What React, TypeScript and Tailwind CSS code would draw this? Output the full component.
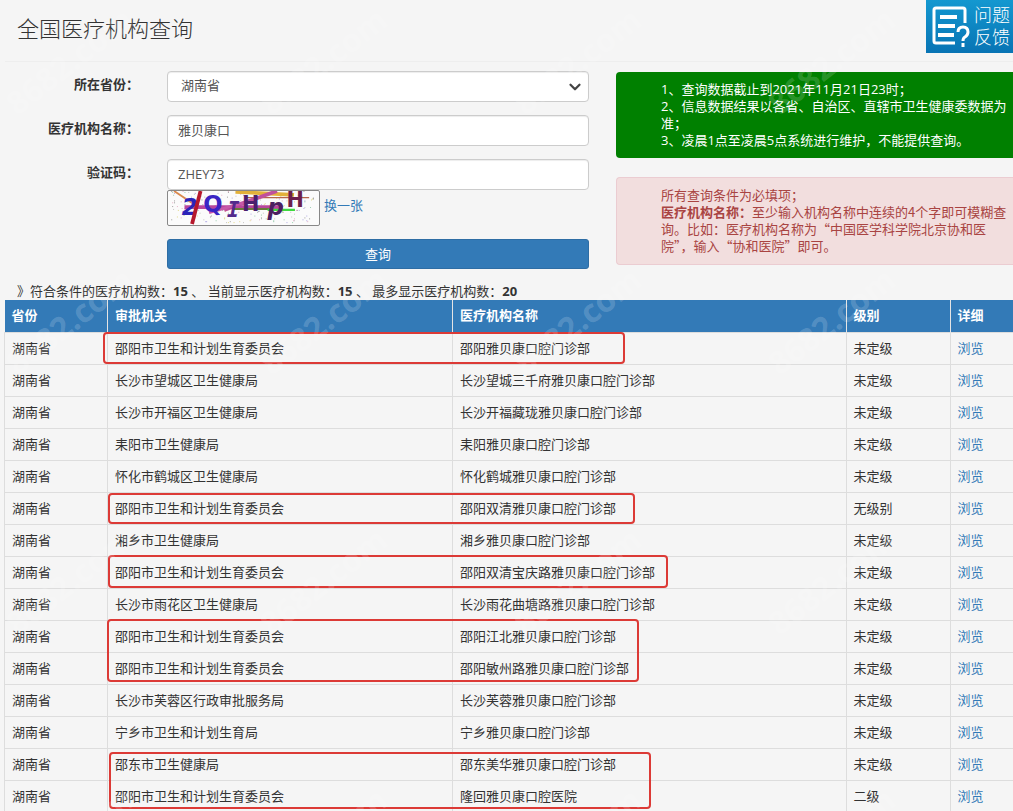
import { ChevronDown } from "lucide-react";

const BUREAU = "邵阳市卫生和计划生育委员会";

const rows = [
  { org: BUREAU, name: "邵阳雅贝康口腔门诊部", level: "未定级" },
  { org: "长沙市望城区卫生健康局", name: "长沙望城三千府雅贝康口腔门诊部", level: "未定级" },
  { org: "长沙市开福区卫生健康局", name: "长沙开福藏珑雅贝康口腔门诊部", level: "未定级" },
  { org: "耒阳市卫生健康局", name: "耒阳雅贝康口腔门诊部", level: "未定级" },
  { org: "怀化市鹤城区卫生健康局", name: "怀化鹤城雅贝康口腔门诊部", level: "未定级" },
  { org: BUREAU, name: "邵阳双清雅贝康口腔门诊部", level: "无级别" },
  { org: "湘乡市卫生健康局", name: "湘乡雅贝康口腔门诊部", level: "未定级" },
  { org: BUREAU, name: "邵阳双清宝庆路雅贝康口腔门诊部", level: "未定级" },
  { org: "长沙市雨花区卫生健康局", name: "长沙雨花曲塘路雅贝康口腔门诊部", level: "未定级" },
  { org: BUREAU, name: "邵阳江北雅贝康口腔门诊部", level: "未定级" },
  { org: BUREAU, name: "邵阳敏州路雅贝康口腔门诊部", level: "未定级" },
  { org: "长沙市芙蓉区行政审批服务局", name: "长沙芙蓉雅贝康口腔门诊部", level: "未定级" },
  { org: "宁乡市卫生和计划生育局", name: "宁乡雅贝康口腔门诊部", level: "未定级" },
  { org: "邵东市卫生健康局", name: "邵东美华雅贝康口腔门诊部", level: "未定级" },
  { org: BUREAU, name: "隆回雅贝康口腔医院", level: "二级" },
];

// hand-drawn marks over the result table
const marks = [
  "left-[99px] top-[32px] h-[32px] w-[522px]",
  "left-[104px] top-[193px] h-[31px] w-[527px]",
  "left-[104px] top-[255px] h-[33px] w-[560px]",
  "left-[103px] top-[319px] h-[63px] w-[532px]",
  "left-[105px] top-[452px] h-[57px] w-[542px]",
];

const field =
  "h-[31px] w-full rounded border border-[#ccc] bg-white pb-[2px] text-[13px] text-[#555] shadow-[inset_0_1px_1px_rgba(0,0,0,0.075)] outline-none focus:border-[#66afe9]";
const label = "w-[134px] shrink-0 pb-1 text-right font-bold text-[#333]";
const th = "border-r border-[#e4e4e4] px-[7px] text-left font-bold last:border-r-0";
const td = "border border-[#ddd] px-[7px]";

function Captcha() {
  const colors = ["#333", "#c8b400", "#5b4bd0", "#2c9c5a", "#d05a8c", "#888"];
  const dots = Array.from({ length: 190 }, (_, i) => ({
    x: (i * 67 + ((i * i) % 13) * 5) % 151,
    y: (i * 29 + ((i * i) % 7) * 3) % 34,
    c: colors[i % colors.length],
  }));
  return (
    <svg viewBox="0 0 153 36" className="h-9 w-[153px] rounded-xs border border-[#888] bg-[#fbfbfb]" role="img" aria-label="验证码">
      {dots.map((d, i) => (
        <rect key={i} x={d.x} y={d.y} width="1" height="1" fill={d.c} opacity="0.5" />
      ))}
      <path d="M3 0L24 14" stroke="#d98a4e" strokeWidth="2" />
      <path d="M68 1L130 4" stroke="#e2b13a" strokeWidth="4" />
      <path d="M80 7H146" stroke="#b5654a" strokeWidth="1.5" />
      <path d="M56 20L112 0" stroke="#c0509c" strokeWidth="4" />
      <path d="M14 17L118 17" stroke="#b8479c" strokeWidth="4" />
      <path d="M40 23L78 12" stroke="#c659a8" strokeWidth="3" />
      <path d="M66 19L104 19" stroke="#6a7a3a" strokeWidth="2" />
      <path d="M102 20H131" stroke="#3fd93f" strokeWidth="2.5" />
      <g fontFamily="'DejaVu Sans', sans-serif" fontWeight="700" fontSize="24">
        <text x="11" y="25" fill="#2b23b8" fontStyle="italic">2</text>
        <text x="34" y="22" fill="#3a25c4">Q</text>
        <text x="59" y="27" fontSize="22" fill="#532a8c" fontStyle="italic" fontFamily="'DejaVu Sans Mono', monospace">I</text>
        <text x="75" y="21" fontSize="22" fill="#4a1f6e">H</text>
        <text x="102" y="25" fill="#4c2060" fontStyle="italic">p</text>
        <text x="122" y="17" fontSize="22" fill="#6b1f4c">H</text>
      </g>
      <path d="M31 0L22 35" stroke="#b5182c" strokeWidth="4" />
    </svg>
  );
}

function FeedbackLink() {
  return (
    <a href="#feedback" className="flex h-[53px] w-[87px] items-center gap-1 bg-linear-to-b from-[#1498d0] to-[#0874b4] pl-[6px] text-white">
      <svg viewBox="0 0 38 42" className="h-[42px] w-[38px] shrink-0" fill="none" stroke="#fff" strokeWidth="3">
        <path d="M33 17V4a2 2 0 0 0-2-2H4a2 2 0 0 0-2 2V35a2 2 0 0 0 2 2H23" />
        <path d="M8 11H25M6 20H23M6 29H22" strokeWidth="4" />
        <path d="M26 26q0-5 5-5t5 5q0 3-3 5-2 1-2 4M31 37v4" />
      </svg>
      <span className="pb-[2px] text-[18px] leading-[22px] font-light">
        问题
        <br />
        反馈
      </span>
    </a>
  );
}

function Watermarks() {
  return (
    <div aria-hidden="true" className="pointer-events-none absolute inset-0 overflow-hidden select-none">
      <div className="grid -translate-x-[58px] -translate-y-[70px] auto-rows-[260px] grid-cols-[repeat(4,254px)]">
        {Array.from({ length: 16 }, (_, i) => (
          <div key={i} className="flex items-center justify-center">
            <span className="-rotate-38 text-[32px] font-bold text-white/18">8682.com</span>
          </div>
        ))}
      </div>
    </div>
  );
}

export default function App() {
  return (
    <div className="relative min-h-screen overflow-hidden bg-[#f5f5f5] pl-1 font-['Open_Sans','Noto_Sans_CJK_SC',sans-serif] text-[13px] leading-[17px] text-[#333]">
      <header className="ml-px flex h-[62px] items-start justify-between border-b border-[#eee]">
        <h1 className="pt-3 pl-3 text-[22px] leading-8 font-light">全国医疗机构查询</h1>
        <FeedbackLink />
      </header>

      <div className="flex items-start gap-[27px] pt-[9px]">
        <form className="w-[585px] shrink-0 pl-px" onSubmit={(e) => e.preventDefault()}>
          <div className="mb-[13px] flex items-center gap-7">
            <label htmlFor="province" className={label}>所在省份：</label>
            <div className="relative flex-1">
              <select id="province" className={`${field} appearance-none px-[13px]`}>
                <option>湖南省</option>
              </select>
              <ChevronDown className="pointer-events-none absolute top-[7px] right-[5px] size-[18px] text-[#444]" strokeWidth={3} />
            </div>
          </div>
          <div className="mb-[13px] flex items-center gap-7">
            <label htmlFor="org" className={label}>医疗机构名称：</label>
            <input id="org" defaultValue="雅贝康口" className={`${field} flex-1 px-[10px]`} />
          </div>
          <div className="flex items-center gap-7">
            <label htmlFor="code" className={label}>验证码：</label>
            <input id="code" defaultValue="ZHEY73" className={`${field} flex-1 px-[10px]`} />
          </div>
          <div className="pl-[162px]">
            <div className="flex items-center gap-1">
              <Captcha />
              <a href="#refresh" className="pb-[5px] text-[#337ab7]">换一张</a>
            </div>
            <button type="submit" className="mt-[13px] h-[30px] w-full rounded-[3px] border border-[#2e6da4] bg-[#337ab7] text-white">
              查询
            </button>
          </div>
        </form>

        <div className="flex-1 pt-px">
          <div className="mb-[19px] rounded-l bg-[#008000] py-[9px] pl-[45px] text-white">
            <p>1、查询数据截止到2021年11月21日23时；</p>
            <p>
              2、信息数据结果以各省、自治区、直辖市卫生健康委数据为
              <br />
              准；
            </p>
            <p>3、凌晨1点至凌晨5点系统进行维护，不能提供查询。</p>
          </div>
          <div className="rounded-l border border-r-0 border-[#ebccd1] bg-[#f2dede] pt-2 pb-[10px] pl-[44px] font-['Noto_Sans_CJK_SC',sans-serif] text-[#a94442]">
            <p>所有查询条件为必填项；</p>
            <p>
              <b>医疗机构名称：</b>至少输入机构名称中连续的4个字即可模糊查
              <br />
              询。比如：医疗机构名称为“中国医学科学院北京协和医
              <br />
              院”，输入“协和医院”即可。
            </p>
          </div>
        </div>
      </div>

      <p className="mt-[14px] pl-[13px]">
        》符合条件的医疗机构数：<b>15</b> 、 当前显示医疗机构数：<b>15</b> 、 最多显示医疗机构数：<b>20</b>
      </p>

      <div className="relative">
        <table className="w-full table-fixed border-collapse">
          <colgroup>
            <col className="w-[103px]" />
            <col className="w-[345px]" />
            <col />
            <col className="w-[104px]" />
            <col className="w-[63px]" />
          </colgroup>
          <thead>
            <tr className="h-8 bg-[#337ab7] text-white">
              <th className={th}>省份</th>
              <th className={th}>审批机关</th>
              <th className={th}>医疗机构名称</th>
              <th className={th}>级别</th>
              <th className={th}>详细</th>
            </tr>
          </thead>
          <tbody>
            {rows.map((r) => (
              <tr key={r.name} className="h-8">
                <td className={td}>湖南省</td>
                <td className={td}>{r.org}</td>
                <td className={td}>{r.name}</td>
                <td className={td}>{r.level}</td>
                <td className={`${td} border-r-0`}>
                  <a href="#detail" className="text-[#337ab7]">浏览</a>
                </td>
              </tr>
            ))}
          </tbody>
        </table>
        {marks.map((m) => (
          <div key={m} className={`pointer-events-none absolute rounded border-2 border-[#dc3a36] ${m}`} />
        ))}
      </div>

      <Watermarks />
    </div>
  );
}
